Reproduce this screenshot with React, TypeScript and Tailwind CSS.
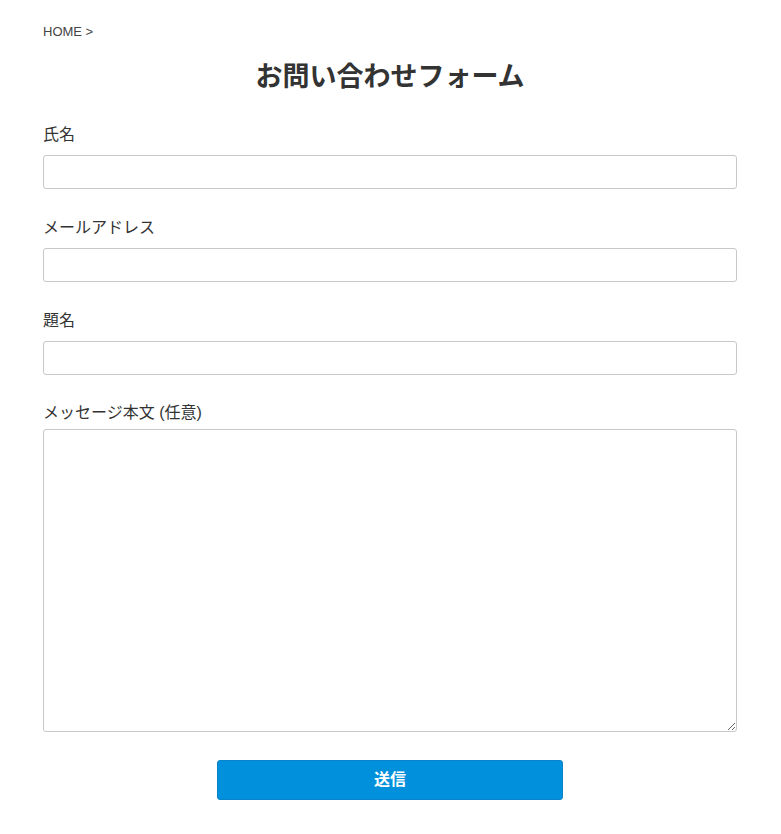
import type { ReactNode } from "react";

const fontStack = "font-['Liberation_Sans','Noto_Sans_CJK_JP',sans-serif]";

function Field({ label, children, className = "" }: { label: string; children: ReactNode; className?: string }) {
  return (
    <div className={className}>
      <label className="block text-[16px] leading-6 text-[#333]">{label}</label>
      {children}
    </div>
  );
}

const inputClass =
  "mt-[8px] block h-[34px] w-full rounded-[3px] border border-[#c8c8c8] bg-white px-2 text-[16px] outline-none";

export default function App() {
  return (
    <div className={`min-h-screen bg-white ${fontStack} text-[#333]`}>
      <div className="ml-[43px] mr-[44px] pt-[24px] pb-8">
        <nav className="text-[13px] leading-4 text-[#444]">HOME &gt;</nav>

        <h1 className="mt-[19px] text-center text-[27px] font-bold leading-9 text-[#333]">お問い合わせフォーム</h1>

        <form className="mt-[28px]" onSubmit={(e) => e.preventDefault()}>
          <Field label="氏名">
            <input type="text" className={inputClass} />
          </Field>

          <Field label="メールアドレス" className="mt-[27px]">
            <input type="email" className={inputClass} />
          </Field>

          <Field label="題名" className="mt-[27px]">
            <input type="text" className={inputClass} />
          </Field>

          <Field label="メッセージ本文 (任意)" className="mt-[26px]">
            <textarea className="mt-[4px] block h-[303px] w-full resize-y rounded-[3px] border border-[#c8c8c8] bg-white p-2 text-[16px] outline-none" />
          </Field>

          <div className="mt-[28px] flex justify-center">
            <button
              type="submit"
              className="h-10 w-[346px] rounded-[3px] border border-[#0a84c8] bg-[#0090dc] text-[16px] font-bold text-white"
            >
              送信
            </button>
          </div>
        </form>
      </div>
    </div>
  );
}
